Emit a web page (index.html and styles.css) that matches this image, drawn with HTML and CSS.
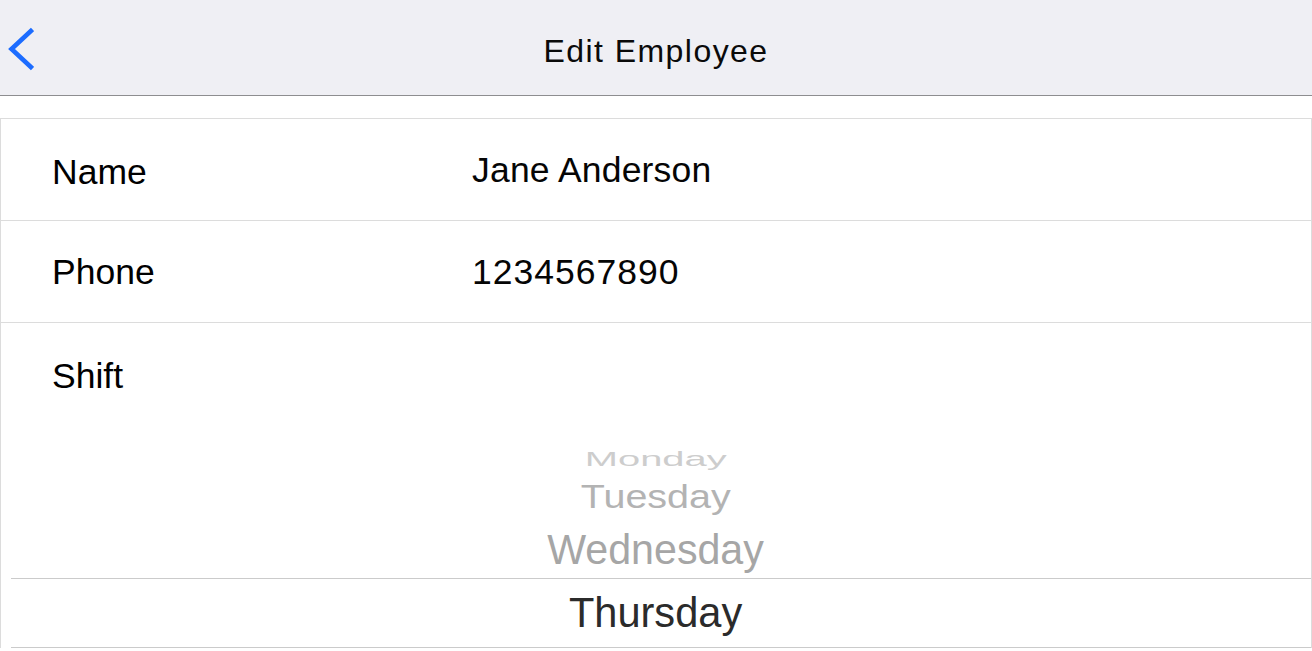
FILE: index.html
```html
<!DOCTYPE html>
<html lang="en">
<head>
<meta charset="utf-8">
<title>Edit Employee</title>
<link rel="stylesheet" href="styles.css">
</head>
<body>
<header class="navbar">
  <div class="nav-left">
    <svg class="back" width="30" height="50" viewBox="0 0 30 50" aria-label="Back">
      <polyline points="28.5,5.5 7.5,25 28.5,44.5" fill="none" stroke="#1c6cff" stroke-width="4.6" stroke-linecap="butt" stroke-linejoin="miter"/>
    </svg>
  </div>
  <div class="nav-title">Edit Employee</div>
  <div class="nav-right"></div>
</header>
<main class="form">
  <div class="row">
    <div class="label label-low">Name</div>
    <div class="value">Jane Anderson</div>
  </div>
  <div class="row">
    <div class="label">Phone</div>
    <div class="value value-num">1234567890</div>
  </div>
  <div class="shift">
    <div class="shift-label">Shift</div>
    <div class="picker">
      <div class="item item-1"><span>Monday</span></div>
      <div class="item item-2"><span>Tuesday</span></div>
      <div class="item item-3"><span>Wednesday</span></div>
      <div class="band"><span>Thursday</span></div>
    </div>
  </div>
</main>
</body>
</html>
```
FILE: styles.css
```css
html, body {
  margin: 0;
  padding: 0;
  background: #ffffff;
  font-family: "Liberation Sans", Arial, sans-serif;
  color: #000;
  overflow: hidden;
}

.navbar {
  height: 89px;
  padding-top: 6px;
  background: #efeff4;
  border-bottom: 1px solid #8d8d90;
  display: grid;
  grid-template-columns: 1fr auto 1fr;
  align-items: center;
}

.nav-left {
  display: flex;
  align-items: center;
  padding-left: 4px;
  margin-top: -3px;
}

.back {
  display: block;
}

.nav-title {
  font-size: 32px;
  letter-spacing: 1.45px;
  color: #0a0a0a;
  line-height: 40px;
}

.form {
  margin-top: 22px;
  border: 1px solid #dcdcdc;
  border-bottom: none;
}

.row {
  height: 101px;
  border-bottom: 1px solid #dcdcdc;
  display: grid;
  grid-template-columns: 420px 1fr;
  padding-left: 51px;
  align-items: center;
  font-size: 35.5px;
  line-height: 40px;
}

.label-low {
  padding-top: 4px;
}

.value {
  color: #050505;
  letter-spacing: 0.2px;
}

.value-num {
  letter-spacing: 1px;
}

.shift {
  padding-top: 33px;
}

.shift-label {
  padding-left: 51px;
  font-size: 35.5px;
  line-height: 40px;
}

.picker {
  margin-top: 50px;
  margin-left: 10px;
  display: flex;
  flex-direction: column;
  align-items: stretch;
  font-size: 42px;
}

.item, .band {
  display: flex;
  justify-content: center;
  align-items: center;
  white-space: nowrap;
}

.item span, .band span {
  display: inline-block;
  line-height: 48px;
  margin-left: -10px;
}

.item-1 {
  height: 25px;
  color: #cdcdcd;
}
.item-1 span {
  transform: scale(0.95, 0.47);
}

.item-2 {
  height: 51px;
  color: #b3b3b3;
}
.item-2 span {
  transform: scale(0.94, 0.77);
}

.item-3 {
  height: 56px;
  color: #a6a6a6;
}
.item-3 span {
  transform: scale(0.98, 1);
}

.band {
  height: 68px;
  border-top: 1px solid #cbcbcb;
  border-bottom: 1px solid #cbcbcb;
  color: #2b2b2b;
}

.band span {
  transform: scale(0.99, 1);
}
```
